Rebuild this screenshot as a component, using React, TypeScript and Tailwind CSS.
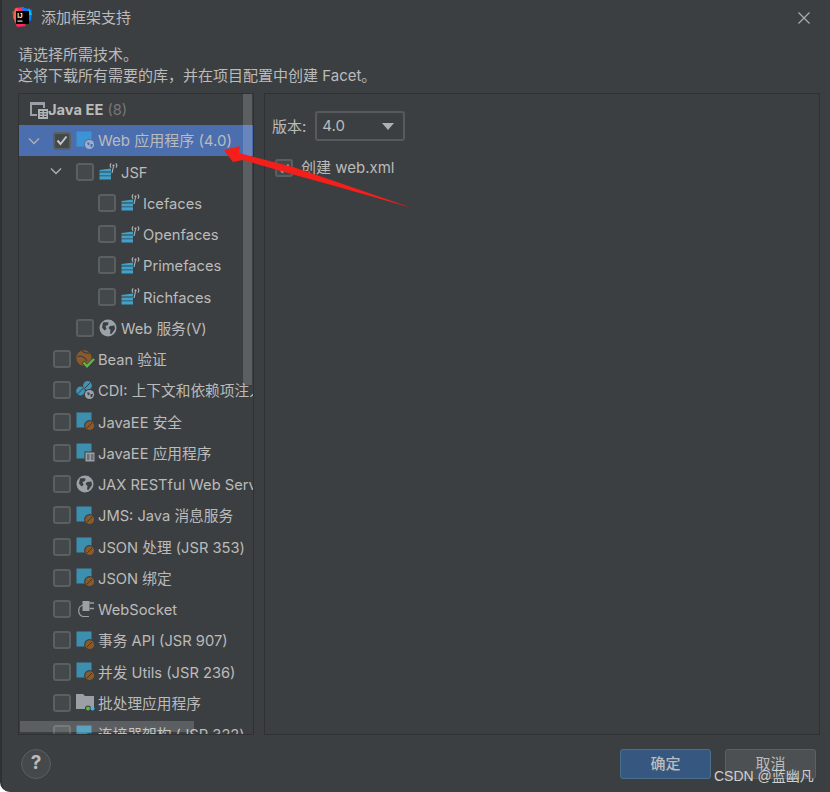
import React from "react";

const font = { fontFamily: 'Inter, "Noto Sans CJK SC", sans-serif' };

function JavaIcon() {
  return (
    <svg width="19" height="19" viewBox="0 0 19 19">
      <rect x="0.5" y="0.5" width="15" height="15" fill="#3d8fb0" />
      <circle cx="13.5" cy="13.5" r="5.4" fill="#3c3f41" />
      <circle cx="13.7" cy="13.7" r="4.4" fill="#8a5a2b" />
      <path d="M11 16L16 11" stroke="#4b3420" strokeWidth="1" />
    </svg>
  );
}

function EEIcon() {
  return (
    <svg width="19" height="19" viewBox="0 0 19 19">
      <rect x="0.5" y="0.5" width="15" height="15" fill="#3d8fb0" />
      <rect x="8.5" y="8.5" width="10" height="10" fill="#3c3f41" />
      <rect x="9.5" y="9.5" width="9" height="9" fill="#9aa0a6" />
      <path d="M11 12h2.5M11 14h2.5M11 16h2.5M15 12h2.5M15 14h2.5M15 16h2.5" stroke="#3c3f41" strokeWidth="1" />
    </svg>
  );
}

function Globe({ size = 18 }: { size?: number }) {
  return (
    <svg width={size} height={size} viewBox="0 0 18 18">
      <circle cx="9" cy="9" r="8.5" fill="#9aa3a9" />
      <path d="M4 3.5C6 3 8 3 9.5 3.5L9 6L6.5 7L7.5 10L5.5 11.5L3 8.5ZM11 7L15.5 6.5L16 10L12.5 15L11 14.5L11.5 11L9.5 9Z" fill="#3c3f41" />
    </svg>
  );
}

function WebAppIcon() {
  return (
    <svg width="19" height="19" viewBox="0 0 19 19">
      <rect x="0.5" y="0.5" width="15" height="15" fill="#3d93d3" />
      <circle cx="13.5" cy="13.5" r="5.5" fill="#4b6eaf" />
      <circle cx="13.5" cy="13.5" r="4.6" fill="#9fb0c8" />
      <path d="M11 11.5h2.5v2l-1.5 1zM14.5 13h2.5l-1 3h-1.5z" fill="#4b6eaf" />
    </svg>
  );
}

function JsfIcon() {
  return (
    <svg width="19" height="19" viewBox="0 0 19 19" className="shrink-0">
      <path d="M0.5 8L12 6.5V9.6H0.5ZM0.5 10.5H12V13.4H0.5ZM0.5 14.3H12V17.5H0.5Z" fill="#41a2c9" />
      <circle cx="14.5" cy="3.6" r="1.1" fill="#b4b7b9" />
      <path d="M14.5 4.5L13 11" stroke="#b4b7b9" strokeWidth="1.1" fill="none" />
      <path d="M12.2 5.7A3.2 3.2 0 0 1 12.2 1.3M16.8 5.7A3.2 3.2 0 0 0 16.8 1.3" stroke="#b4b7b9" strokeWidth="1.1" fill="none" />
    </svg>
  );
}

function BeanValidationIcon() {
  return (
    <svg width="19" height="19" viewBox="0 0 19 19">
      <circle cx="8" cy="8" r="7.7" fill="#8a5a2b" />
      <path d="M1.5 6.5C5 5.5 9 7 11 11M6 1C8 3 11 3.5 14 3" stroke="#3c3f41" strokeWidth="1.2" fill="none" />
      <path d="M7 12L11 16.5L18 9" stroke="#3c3f41" strokeWidth="4" fill="none" />
      <path d="M7.5 12.5L11 16.2L18 9" stroke="#62b543" strokeWidth="2.4" fill="none" />
    </svg>
  );
}

function CdiIcon() {
  return (
    <svg width="19" height="19" viewBox="0 0 19 19">
      <circle cx="11.5" cy="4.5" r="4.4" fill="#3d93b8" />
      <circle cx="4.5" cy="10" r="4.4" fill="#3d93b8" />
      <path d="M8.5 7.5L14.5 1.5M1.5 13L7.5 7" stroke="#3c3f41" strokeWidth="1" />
      <circle cx="13.5" cy="13.5" r="5.4" fill="#3c3f41" />
      <circle cx="13.5" cy="13.5" r="4.6" fill="#9aa3a9" />
      <path d="M11 11.5h2.5v2l-1.5 1zM14.5 13h2.5l-1 3h-1.5z" fill="#3c3f41" />
    </svg>
  );
}

function SocketIcon() {
  return (
    <svg width="19" height="19" viewBox="0 0 19 19">
      <path d="M13 16.5H7A6 6 0 0 1 7 5H9" stroke="#9aa0a3" strokeWidth="1.2" fill="none" />
      <rect x="6.5" y="1" width="7" height="10" fill="#9aa0a3" />
      <path d="M13.5 3H18M13.5 8.5H18" stroke="#9aa0a3" strokeWidth="1.5" />
    </svg>
  );
}

function BatchIcon() {
  return (
    <svg width="19" height="19" viewBox="0 0 19 19">
      <path d="M0 1H7L9 3H18V16H0Z" fill="#9aa0a6" />
      <circle cx="12" cy="15.5" r="3" fill="#3c3f41" />
      <circle cx="12" cy="15.5" r="2" fill="#62b543" />
      <circle cx="16.5" cy="15.5" r="2" fill="#40b6e0" />
    </svg>
  );
}

function EEGroupIcon() {
  return (
    <svg width="19" height="19" viewBox="0 0 19 19">
      <rect x="0" y="1" width="15" height="14" fill="#9aa0a6" />
      <rect x="2" y="4" width="11" height="9" fill="#3c3f41" />
      <rect x="7" y="7" width="11" height="11" fill="#3c3f41" />
      <rect x="8" y="8" width="10" height="10" fill="#aeb2b5" />
      <path d="M10 10.5h2.5M10 13h2.5M10 15.5h2.5M14 10.5h2.5M14 13h2.5M14 15.5h2.5" stroke="#3c3f41" strokeWidth="1" />
    </svg>
  );
}

function Chevron() {
  return (
    <svg width="12" height="8" viewBox="0 0 12 8">
      <path d="M1 1.5L6 6.5L11 1.5" stroke="#aeb0b2" strokeWidth="1.4" fill="none" />
    </svg>
  );
}

function Checkbox({ checked, dim }: { checked?: boolean; dim?: boolean }) {
  return (
    <span className="flex h-[18px] w-[18px] shrink-0 items-center justify-center rounded-[3px] border-2 border-[#5c5f60] bg-[#43494a]">
      {checked && (
        <svg width="12" height="11" viewBox="0 0 12 11">
          <path d="M1.5 5.5L4.5 9L10.5 1.5" stroke={dim ? "#9b9d9f" : "#c4c6c8"} strokeWidth="2" fill="none" />
        </svg>
      )}
    </span>
  );
}

type Row = { label: string; icon: React.ReactNode; level: 0 | 1 | 2; open?: boolean };

const rows: Row[] = [
  { label: "JSF", icon: <JsfIcon />, level: 1, open: true },
  { label: "Icefaces", icon: <JsfIcon />, level: 2 },
  { label: "Openfaces", icon: <JsfIcon />, level: 2 },
  { label: "Primefaces", icon: <JsfIcon />, level: 2 },
  { label: "Richfaces", icon: <JsfIcon />, level: 2 },
  { label: "Web 服务(V)", icon: <Globe />, level: 1 },
  { label: "Bean 验证", icon: <BeanValidationIcon />, level: 0 },
  { label: "CDI: 上下文和依赖项注入", icon: <CdiIcon />, level: 0 },
  { label: "JavaEE 安全", icon: <JavaIcon />, level: 0 },
  { label: "JavaEE 应用程序", icon: <EEIcon />, level: 0 },
  { label: "JAX RESTful Web Services", icon: <Globe />, level: 0 },
  { label: "JMS: Java 消息服务", icon: <JavaIcon />, level: 0 },
  { label: "JSON 处理 (JSR 353)", icon: <JavaIcon />, level: 0 },
  { label: "JSON 绑定", icon: <JavaIcon />, level: 0 },
  { label: "WebSocket", icon: <SocketIcon />, level: 0 },
  { label: "事务 API (JSR 907)", icon: <JavaIcon />, level: 0 },
  { label: "并发 Utils (JSR 236)", icon: <JavaIcon />, level: 0 },
  { label: "批处理应用程序", icon: <BatchIcon />, level: 0 },
  { label: "连接器架构 (JSR 322)", icon: <JavaIcon />, level: 0 },
];

const indent = { 0: "pl-[34px]", 1: "pl-[57px]", 2: "pl-[79px]" };
const chevronPos = { 0: "left-[9px]", 1: "left-[31px]", 2: "left-[53px]" };

function TreeRow({ r }: { r: Row }) {
  return (
    <div className={`relative flex h-[31.25px] shrink-0 items-center whitespace-nowrap ${indent[r.level]}`}>
      {r.open && (
        <span className={`absolute top-[11px] flex ${chevronPos[r.level]}`}>
          <Chevron />
        </span>
      )}
      <Checkbox />
      <span className="ml-[5px] flex w-[19px] shrink-0">{r.icon}</span>
      <span className="ml-[3px] pt-[2px] text-[14.7px]">{r.label}</span>
    </div>
  );
}

export default function App() {
  return (
    <div
      className="relative flex h-[792px] w-[830px] flex-col overflow-hidden rounded-bl-[10px] border-l-2 border-[#2e3031] bg-[#3c3f41] text-[15px] text-[#bbbbbb]"
      style={font}
    >
      {/* title bar */}
      <div className="flex h-[36px] shrink-0 items-center pl-[10px] pr-[20px]">
        <svg width="21" height="21" viewBox="0 0 21 21" className="-translate-y-px">
          <path d="M3 1L12 0L10 10L1 12Z" fill="#fe315d" />
          <path d="M10 0L20 3L19 14L12 12Z" fill="#087cfa" />
          <path d="M17 1L20 8L15 8Z" fill="#07c3f2" />
          <path d="M1 10L5 20L14 19L8 10Z" fill="#fe2857" />
          <path d="M0 5L3 16L8 8L5 1Z" fill="#fcf84a" opacity="0.25" />
          <rect x="4" y="4" width="13" height="13" fill="#000000" />
          <text x="5.3" y="11" fontSize="6.5" fontWeight="700" fill="#ffffff" style={{ fontFamily: '"Liberation Sans", sans-serif' }}>
            IJ
          </text>
          <rect x="5.5" y="13.6" width="5" height="1" fill="#ffffff" />
        </svg>
        <span className="ml-[8px]">添加框架支持</span>
        <svg className="ml-auto" width="12" height="12" viewBox="0 0 12 12">
          <path d="M0.5 0.5L11.5 11.5M11.5 0.5L0.5 11.5" stroke="#a9abad" strokeWidth="1.3" />
        </svg>
      </div>

      {/* description */}
      <div className="flex h-[57px] shrink-0 flex-col justify-start pl-[16px] pt-[8px] leading-[21px]">
        <div>请选择所需技术。</div>
        <div>这将下载所有需要的库，并在项目配置中创建 Facet。</div>
      </div>

      {/* panels */}
      <div className="flex h-[642px] shrink-0 gap-[10px] pl-[16px] pr-[10px]">
        <div className="relative flex w-[236px] shrink-0 flex-col overflow-hidden border border-[#2f3133]">
          <div className="flex h-[31px] shrink-0 items-center pl-[11px] pt-[2px] text-[14.7px]">
            <EEGroupIcon />
            <span className="-ml-px font-bold">Java EE</span>
            <span className="ml-[4px] text-[#787878]">(8)</span>
          </div>
          <div className="relative flex h-[31px] shrink-0 items-center whitespace-nowrap bg-[#4b6eaf] pl-[34px]">
            <span className="absolute left-[9px] top-[12px] flex">
              <Chevron />
            </span>
            <Checkbox checked />
            <span className="ml-[5px] flex w-[19px] shrink-0">
              <WebAppIcon />
            </span>
            <span className="ml-[3px] pt-[2px]">Web 应用程序 (4.0)</span>
          </div>
          {rows.map((r) => (
            <TreeRow key={r.label} r={r} />
          ))}
          <div className="absolute left-[224px] top-0 h-[291px] w-[9px] bg-[#ffffff]/[0.17]" />
          <div className="absolute bottom-[2px] left-px h-[11px] w-[174px] bg-[#ffffff]/[0.17]" />
        </div>

        <div className="flex flex-1 flex-col border border-[#2f3133] pl-[7px] pt-[17px]">
          <div className="flex h-[30px] items-center">
            <span className="pt-[2px]">版本:</span>
            <div className="ml-[9px] flex h-[30px] w-[90px] items-center rounded-[3px] border-2 border-[#565a5c] bg-[#3c3f41] pl-[5px] pr-[9px]">
              <span className="pt-px">4.0</span>
              <svg className="ml-auto" width="12" height="7" viewBox="0 0 12 7">
                <path d="M0 0H12L6 7Z" fill="#aeb0b2" />
              </svg>
            </div>
          </div>
          <div className="mt-[16px] flex h-[22px] items-center pl-[3px]">
            <Checkbox checked dim />
            <span className="ml-[8px]">创建 web.xml</span>
          </div>
        </div>
      </div>

      {/* footer */}
      <div className="flex flex-1 items-center pl-[19px] pr-[14px]">
        <span className="flex h-[30px] w-[30px] items-center justify-center rounded-full border border-[#5c5f60] bg-[#46494b] text-[19px] font-bold text-[#bbbbbb]">
          ?
        </span>
        <button className="ml-auto h-[30px] w-[91px] rounded-[3px] border border-[#4c708c] bg-[#365880] pt-px font-medium text-[#bbbbbb]">
          确定
        </button>
        <button className="ml-[14px] h-[30px] w-[91px] rounded-[3px] border border-[#5e6060] bg-[#4c5052] pt-px text-[#bbbbbb]">
          取消
        </button>
      </div>

      {/* annotation arrow */}
      <svg className="absolute -left-[2px] top-0" width="830" height="792" viewBox="0 0 830 792">
        <path d="M224 150L240 146L239 153L293 167L340 183L412 208L342 188L295 175L243 160L233 162Z" fill="#f41f1a" />
      </svg>

      {/* watermark */}
      <span
        className="absolute left-[712px] top-[766px] text-[14px] leading-[20px] text-[#cfd0d1]"
        style={{ fontFamily: '"Liberation Sans", "Noto Sans CJK SC", sans-serif' }}
      >
        CSDN @蓝幽凡
      </span>
    </div>
  );
}
